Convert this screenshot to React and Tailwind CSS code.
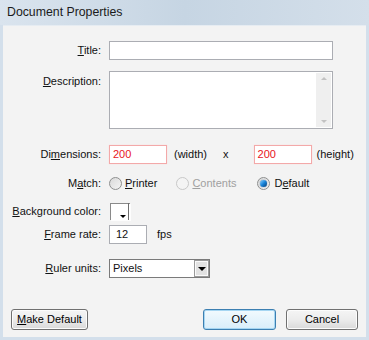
import React from 'react';

const font = { fontFamily: '"Liberation Sans", Arial, sans-serif' };

const Label = ({ children, className = '' }) => (
  <div className={`w-[98px] shrink-0 text-right text-[11px] text-[#111] ${className}`}>{children}</div>
);

const Radio = ({ checked, disabled }) => (
  <span
    className={`relative inline-flex h-[13px] w-[13px] items-center justify-center rounded-full border ${
      disabled ? 'border-[#c8c8c8] bg-[#f4f4f4]' : 'border-[#8e8f8f] bg-gradient-to-br from-[#d9d9d9] to-[#f4f4f4]'
    }`}
  >
    {checked && (
      <span className="h-[7px] w-[7px] rounded-full bg-gradient-to-br from-[#7fd0ff] via-[#1683d8] to-[#0b3f7a] shadow-[0_0_1px_#0b3f7a]" />
    )}
  </span>
);

const Button = ({ children, primary, className = '' }) => (
  <button
    className={`h-[21px] rounded-[3px] border text-[11px] text-black ${
      primary
        ? 'border-[#3c7fb1] bg-gradient-to-b from-[#f2fafe] to-[#d9eefa] shadow-[inset_0_0_0_1px_#a6d6f2]'
        : 'border-[#707070] bg-gradient-to-b from-[#f5f5f5] via-[#ececec] to-[#d9d9d9] shadow-[inset_0_0_0_1px_#fcfcfc]'
    } ${className}`}
  >
    {children}
  </button>
);

export default function App() {
  return (
    <div style={font} className="flex h-[340px] w-[369px] flex-col bg-[#d3dfeb]">
      <div className="flex h-[25px] items-center bg-gradient-to-r from-[#dae4ee] via-[#c6d5e3] to-[#d4dfea] pl-[7px] text-[12.3px] text-[#1b1b1b]">
        Document Properties
      </div>
      <div className="mx-[3px] mb-[3px] flex flex-1 flex-col border-t border-[#e6ecf2] bg-[#f3f3f3]">
        {/* Title */}
        <div className="mt-[15px] flex items-center">
          <Label>
            <span className="underline">T</span>itle:
          </Label>
          <div className="ml-[8px] h-[19px] w-[224px] border border-[#abadb3] bg-white" />
        </div>

        {/* Description */}
        <div className="mt-[11px] flex items-start">
          <Label className="mt-[2px]">
            <span className="underline">D</span>escription:
          </Label>
          <div className="ml-[8px] flex h-[58px] w-[224px] justify-end border border-[#abadb3] bg-white p-[1px]">
            <div className="flex w-[15px] flex-col items-center justify-between bg-[#efefef] py-[4px]">
              <span className="h-0 w-0 border-x-[3px] border-b-[3px] border-x-transparent border-b-[#c2c2c2]" />
              <span className="h-0 w-0 border-x-[3px] border-t-[3px] border-x-transparent border-t-[#c2c2c2]" />
            </div>
          </div>
        </div>

        {/* Dimensions */}
        <div className="mt-[16px] flex items-center text-[11px] text-[#111]">
          <Label>
            Di<span className="underline">m</span>ensions:
          </Label>
          <div className="ml-[8px] flex h-[19px] w-[58px] items-center border border-[#f3a9a9] bg-white pl-[3px] text-[#e8141c] shadow-[0_0_1px_#fbd0d0]">
            200
          </div>
          <span className="ml-[7px]">(width)</span>
          <span className="ml-[16px]">x</span>
          <div className="ml-[25px] flex h-[19px] w-[58px] items-center border border-[#f3a9a9] bg-white pl-[3px] text-[#e8141c] shadow-[0_0_1px_#fbd0d0]">
            200
          </div>
          <span className="ml-[5px]">(height)</span>
        </div>

        {/* Match */}
        <div className="mt-[10px] flex h-[19px] items-center text-[11px] text-[#111]">
          <Label>
            M<span className="underline">a</span>tch:
          </Label>
          <div className="ml-[8px] flex items-center">
            <Radio />
            <span className="ml-[3px]">
              <span className="underline">P</span>rinter
            </span>
          </div>
          <div className="ml-[19px] flex items-center text-[#a0a0a0]">
            <Radio disabled />
            <span className="ml-[3px]">
              <span className="underline">C</span>ontents
            </span>
          </div>
          <div className="ml-[21px] flex items-center">
            <Radio checked />
            <span className="ml-[4px]">
              D<span className="underline">e</span>fault
            </span>
          </div>
        </div>

        {/* Background color */}
        <div className="mt-[8px] flex h-[20px] items-center">
          <Label>
            <span className="underline">B</span>ackground color:
          </Label>
          <div className="relative ml-[9px] h-[17px] w-[20px] border-l border-t border-[#8a8a8a] bg-white shadow-[1px_1px_0_#fdfdfd]">
            <span className="absolute right-[1px] top-[-1px] h-[17px] w-px bg-[#6d6d6d]" />
            <span className="absolute bottom-[2px] right-[4px] h-0 w-0 border-x-[3px] border-t-[3px] border-x-transparent border-t-black" />
          </div>
        </div>

        {/* Frame rate */}
        <div className="mt-[4px] flex items-center text-[11px] text-[#111]">
          <Label>
            <span className="underline">F</span>rame rate:
          </Label>
          <div className="ml-[8px] flex h-[19px] w-[38px] items-center border border-[#abadb3] bg-white pl-[6px]">12</div>
          <span className="ml-[10px]">fps</span>
        </div>

        {/* Ruler units */}
        <div className="mt-[15px] flex items-center text-[11px] text-[#111]">
          <Label>
            <span className="underline">R</span>uler units:
          </Label>
          <div className="ml-[8px] flex h-[19px] w-[101px] items-center justify-between border border-[#7a7a7a] bg-white pl-[3px]">
            <span>Pixels</span>
            <div className="flex h-[17px] w-[15px] items-center justify-center border border-[#9a9a9a] bg-[#e2e2e2] shadow-[inset_0_0_0_1px_#fafafa]">
              <span className="h-0 w-0 border-x-[4px] border-t-[4px] border-x-transparent border-t-black" />
            </div>
          </div>
        </div>

        {/* Buttons */}
        <div className="mt-auto mb-[7px] flex items-center px-[8px]">
          <Button className="w-[77px]">
            <span className="underline">M</span>ake Default
          </Button>
          <Button primary className="ml-auto w-[73px]">
            OK
          </Button>
          <Button className="ml-[10px] w-[72px]">Cancel</Button>
        </div>
      </div>
    </div>
  );
}
